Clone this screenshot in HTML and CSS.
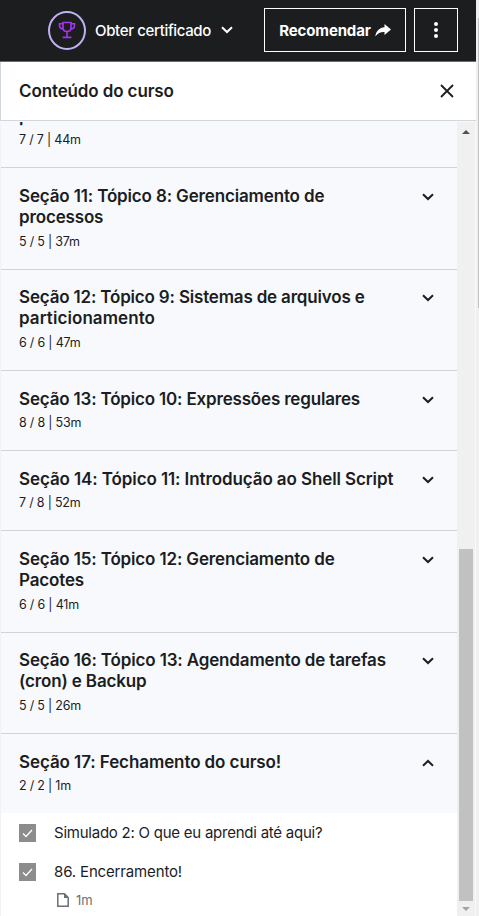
FILE: index.html
```html
<!DOCTYPE html>
<html lang="pt-BR">
<head>
<meta charset="utf-8">
<title>Conteúdo do curso</title>
<link rel="stylesheet" href="styles.css">
</head>
<body>
<svg class="defs" aria-hidden="true">
  <symbol id="down" viewBox="0 0 12 8"><path d="M1 1.2 6 6l5-4.8" fill="none" stroke="currentColor" stroke-width="2"/></symbol>
  <symbol id="check" viewBox="0 0 17 18"><path d="m4 9.5 3 3 6-6.5" fill="none" stroke="#fff" stroke-width="1.3"/></symbol>
</svg>
<div class="page">
  <div class="main">
    <header class="topbar">
      <span class="trophy">
        <svg width="18" height="18" viewBox="0 0 18 18" fill="none" stroke="#a435f0" stroke-width="1.6"><path d="M5 1.5h8v5.2C13 9 11.3 10.5 9 10.5S5 9 5 6.700zM5 2.800H1.500v1.500C1.500 6.500 3 8 5.300 8M13 2.800h3.500v1.500C16.500 6.500 15 8 12.700 8M9 10.500v5.500M4.600 16.400h8.800"/></svg>
      </span>
      <span class="certificate">Obter certificado</span>
      <svg class="chevron top-chevron"><use href="#down"/></svg>
      <button class="button share"><span class="share-label">Recomendar</span>
        <svg width="16" height="13" viewBox="0 0 16 13"><path d="M9.500 0 16 5.500 9.500 11V8C5.500 7.800 3 9 .300 12.500 1 7 4.500 3.600 9.500 3.200z" fill="#fff"/></svg>
      </button>
      <button class="button more" aria-label="Mais"><i></i><i></i><i></i></button>
    </header>
    <div class="panel-head">
      <h2>Conteúdo do curso</h2>
      <svg width="14" height="14" viewBox="0 0 14 14"><path d="m1 1 12 12M13 1 1 13" stroke="#1c1d1f" stroke-width="1.800"/></svg>
    </div>
    <div class="viewport">
      <div class="sections">
        <section class="section clipped"><div><h3>p</h3><p>7 / 7 | 44m</p></div></section>
        <section class="section two-line"><div><h3 class="s11">Seção 11: Tópico 8: Gerenciamento de<br>processos</h3><p>5 / 5 | 37m</p></div><svg class="chevron"><use href="#down"/></svg></section>
        <section class="section two-line"><div><h3 class="s12">Seção 12: Tópico 9: Sistemas de arquivos e<br><span>particionamento</span></h3><p>6 / 6 | 47m</p></div><svg class="chevron"><use href="#down"/></svg></section>
        <section class="section"><div><h3 class="s13">Seção 13: Tópico 10: Expressões regulares</h3><p>8 / 8 | 53m</p></div><svg class="chevron"><use href="#down"/></svg></section>
        <section class="section"><div><h3 class="s14">Seção 14: Tópico 11: Introdução ao Shell Script</h3><p>7 / 8 | 52m</p></div><svg class="chevron"><use href="#down"/></svg></section>
        <section class="section two-line"><div><h3 class="s15">Seção 15: Tópico 12: Gerenciamento de<br>Pacotes</h3><p>6 / 6 | 41m</p></div><svg class="chevron"><use href="#down"/></svg></section>
        <section class="section two-line"><div><h3 class="s16">Seção 16: Tópico 13: Agendamento de tarefas<br>(cron) e Backup</h3><p>5 / 5 | 26m</p></div><svg class="chevron"><use href="#down"/></svg></section>
        <section class="section open"><div><h3 class="s17">Seção 17: Fechamento do curso!</h3><p>2 / 2 | 1m</p></div><svg class="chevron up"><use href="#down"/></svg></section>
        <ul class="lessons">
          <li><svg class="box"><use href="#check"/></svg><span class="quiz">Simulado 2: O que eu aprendi até aqui?</span></li>
          <li><svg class="box"><use href="#check"/></svg><span>86. Encerramento!</span></li>
        </ul>
        <div class="duration"><svg width="12" height="14" viewBox="0 0 12 14"><path d="M.800.800h6.700l3.700 3.700v8.700H.800z" fill="none" stroke="#6a6f73" stroke-width="1.500"/><path d="M7 .500 11.500 5H7z" fill="#6a6f73"/></svg><span>1m</span></div>
      </div>
      <div class="scrollbar"><svg width="8" height="4" viewBox="0 0 8 4"><path d="M4 0 8 4H0z" fill="#505050"/></svg><div class="thumb"></div><svg class="end" width="8" height="4" viewBox="0 0 8 4"><path d="M0 0h8L4 4z" fill="#a3a3a3"/></svg></div>
    </div>
  </div>
  <div class="page-scroll"><div></div></div>
</div>
</body>
</html>
```

FILE: styles.css
```css
* { box-sizing: border-box; }
body { margin: 0; background: #fff; color: #1c1d1f; font-family: Inter, "Liberation Sans", sans-serif; overflow: hidden; }
h2, h3, p, ul { margin: 0; padding: 0; }
.defs { display: none; }
.page { display: flex; height: 916px; overflow: hidden; }
.main { width: 476px; display: flex; flex-direction: column; }
.topbar { height: 62px; flex: none; display: flex; align-items: center; padding: 0 18px 1px 48px; background: #1c1d1f; border-bottom: 1px solid #6a6b76; color: #fff; }
.trophy { width: 38px; height: 39px; flex: none; border: 2px solid #c0b0f5; border-radius: 50%; display: grid; place-items: center; }
.certificate { width: 117px; margin-left: 9px; font-size: 15px; font-weight: 500; letter-spacing: -.35px; white-space: nowrap; }
.chevron { width: 12px; height: 8px; flex: none; }
.top-chevron { margin-left: 9px; }
.button { height: 44px; border: 1px solid #fff; background: none; color: #fff; font: 700 15px Inter, sans-serif; display: flex; align-items: center; justify-content: center; padding: 0; }
.share { width: 142px; margin-left: auto; gap: 4px; }
.share-label { letter-spacing: -.15px; }
.more { width: 44px; margin-left: 8px; flex-direction: column; gap: 2px; }
.more i { width: 4px; height: 4px; border-radius: 50%; background: #fff; }
.panel-head { height: 59px; flex: none; display: flex; align-items: center; justify-content: space-between; padding: 0 22px 0 18px; border: 1px solid #d1d7dc; border-width: 0 0 1px 1px; }
h2 { font-size: 17px; line-height: 22px; font-weight: 600; letter-spacing: -.12px; }
.viewport { flex: 1; min-height: 0; display: flex; overflow: hidden; padding-top: 1px; background: #f7f9fa; }
.sections { width: 457px; border-left: 1px solid #f0f2f6; background: #fff; overflow: hidden; }
.section { height: 80px; display: flex; justify-content: space-between; background: #f7f9fc; border-bottom: 1px solid #d1d2dc; padding: 17.6px 23px 0 18px; }
.section.two-line { height: 101.5px; }
.section.clipped { margin-top: -34px; }
.section.open { height: 79px; border: 0; }
.section .chevron { margin-top: 7px; }
.up { transform: rotate(180deg); }
h3 { font-size: 17px; line-height: 21.3px; font-weight: 600; letter-spacing: -.15px; white-space: nowrap; }
.s12, .s13 { letter-spacing: -.18px; }
.s12 span { letter-spacing: .08px; }
.s14 { letter-spacing: -.1px; }
.s17 { letter-spacing: -.09px; }
.section p { margin-top: 4.4px; font-size: 12.5px; line-height: 18px; letter-spacing: -.2px; }
.lessons { list-style: none; padding: 0 18px; }
.lessons li { height: 39px; display: flex; align-items: center; gap: 18px; font-size: 15px; letter-spacing: -.15px; white-space: nowrap; }
.quiz { letter-spacing: -.24px; }
.box { width: 17px; height: 18px; background: #8c8c8c; }
.duration { display: flex; align-items: center; gap: 7px; height: 18px; padding-left: 56px; font-size: 13px; color: #6a6f73; }
.scrollbar { width: 18px; background: #f0f0f0; display: flex; flex-direction: column; align-items: center; padding-top: 8px; }
.thumb { width: 14px; height: 352px; margin-top: 415px; background: #c1c1c1; }
.end { margin-top: 6px; }
.page-scroll { width: 3px; background: #f0f0f0; padding: 18px 0 0 2px; }
.page-scroll div { height: 290px; background: #c1c1c1; }
```
